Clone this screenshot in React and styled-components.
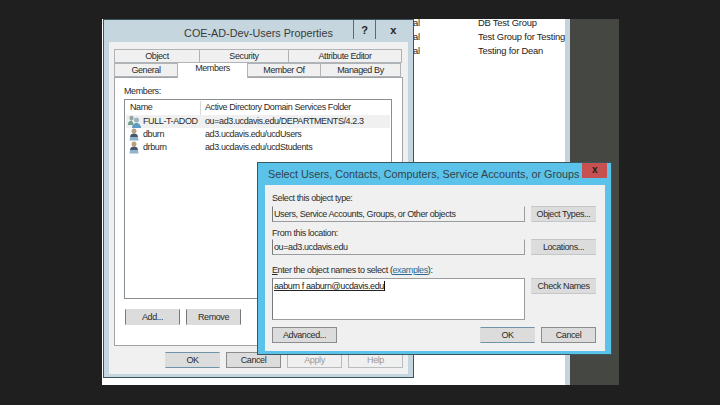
import React from 'react';
import styled, { createGlobalStyle } from 'styled-components';

const GlobalStyle = createGlobalStyle`
  html, body { margin: 0; height: 100%; background: #1f1f1f; overflow: hidden; }
  #root { height: 100%; }
`;

const Page = styled.div`
  width: 720px;
  height: 405px;
  padding: 19px 101px 20px 102px;
  box-sizing: border-box;
  font-family: "Liberation Sans", Arial, sans-serif;
  font-size: 9px;
  letter-spacing: -0.4px;
  color: #2b2b2b;
`;
const Screen = styled.div`
  height: 100%;
  display: flex;
`;
const Desktop = styled.div`
  position: relative;
  flex: 1;
  background: #fff;
`;
const SideStrip = styled.div`
  width: 51px;
  background: #454743;
`;

// window behind the dialogs, only its right part shows
const BackWindow = styled.div`
  height: 100%;
  box-sizing: border-box;
  padding-left: 311px;
  border-right: 5px solid #c5d4dc;
  overflow: hidden;
`;
const BackRow = styled.div`
  display: grid;
  grid-template-columns: 65px 1fr;
  height: 14px;
  line-height: 7px;
  font-size: 9.4px;
  letter-spacing: -0.2px;
  white-space: nowrap;
  color: #222;
`;

const Win = styled.div`
  position: absolute;
  left: ${p => p.$left}px;
  top: ${p => p.$top}px;
  width: ${p => p.$w}px;
  height: ${p => p.$h}px;
  box-sizing: border-box;
  display: flex;
  flex-direction: column;
  background: ${p => p.$frame};
  border: 1px solid #3c5660;
`;
const TitleBar = styled.div`
  position: relative;
  display: flex;
  align-items: center;
  flex: none;
  height: ${p => p.$h}px;
  box-sizing: border-box;
  padding-top: ${p => p.$pt || 0}px;
`;
const PropsTitle = styled.div`
  flex: 1;
  text-align: center;
  font-size: 10.8px;
  letter-spacing: 0;
  color: #3a3a3a;
`;
const Captions = styled.div`
  position: absolute;
  top: 0;
  right: 3px;
  height: 19px;
  display: flex;
`;
const Caption = styled.div`
  width: ${p => p.$w}px;
  height: 100%;
  display: flex;
  align-items: center;
  justify-content: center;
  font-size: 11px;
  font-weight: bold;
  color: #222;
  border-left: ${p => (p.$line ? '1px solid #5b6a70' : 'none')};
  border-right: ${p => (p.$line ? '1px solid #5b6a70' : 'none')};
  box-sizing: border-box;
`;
const PropsBody = styled.div`
  flex: 1;
  margin: 0 5px 5px 5px;
  background: #f0f0f0;
  padding: 7px 5px 6px 6px;
  display: flex;
  flex-direction: column;
`;

const TabRow = styled.div`
  display: flex;
  height: 14px;
  flex: none;
`;
const Tab = styled.div`
  width: ${p => p.$w}px;
  box-sizing: border-box;
  position: relative;
  z-index: ${p => (p.$active ? 2 : 0)};
  height: ${p => (p.$active ? 16 : 14)}px;
  margin-top: ${p => (p.$active ? -1 : 0)}px;
  background: ${p => (p.$active ? '#fff' : '#f0f0f0')};
  border: 1px solid #b0b4b6;
  border-bottom: ${p => (p.$active ? 'none' : '1px solid #b0b4b6')};
  margin-left: -1px;
  text-align: center;
  line-height: ${p => (p.$active ? 11 : 13)}px;
`;
const Panel = styled.div`
  height: 269px;
  box-sizing: border-box;
  background: #fff;
  border: 1px solid #a0a4a6;
  padding: 7px 10px 0 9px;
  margin-left: -1px;
  display: flex;
  flex-direction: column;
`;
const Label = styled.div`
  line-height: 13px;
  color: #2b2b2b;
`;
const ListBox = styled.div`
  margin-top: 1px;
  width: 268px;
  height: 200px;
  box-sizing: border-box;
  border: 1px solid #8a8e90;
  padding: 1px;
  flex: none;
`;
const ListRow = styled.div`
  display: grid;
  grid-template-columns: 74px 1fr;
  height: ${p => (p.$head ? 14 : 13)}px;
  line-height: 13px;
  white-space: nowrap;
  background: ${p => (p.$selected ? '#f0f0f0' : 'transparent')};
`;
const HeadCell = styled.div`
  padding-left: 4px;
  border-left: ${p => (p.$sep ? '1px solid #d8d8d8' : 'none')};
`;
const NameCell = styled.div`
  display: flex;
  align-items: center;
  gap: 2px;
  padding-left: 2px;
`;
const Cell = styled.div`
  padding-left: 5px;
`;
const BtnRow = styled.div`
  display: flex;
  gap: 6px;
  justify-content: ${p => (p.$end ? 'flex-end' : 'flex-start')};
  flex: none;
`;

const btnBorders = {
  plain: { side: '#8a8c8e', edge: '#8a8c8e' },
  sides: { side: '#77797b', edge: '#dcdcdc' },
  soft: { side: '#dcdcdc', edge: '#c4c6c8' },
  primary: { side: '#dcdcdc', edge: '#6f93a8' },
  disabled: { side: '#b8bcbe', edge: '#b8bcbe' },
};
const Btn = styled.div`
  width: ${p => p.$w || 55}px;
  height: 16px;
  box-sizing: border-box;
  background: ${p => (p.$kind === 'disabled' ? '#f0f0f0' : '#dcdcdc')};
  border-style: solid;
  border-width: 1px;
  border-color: ${p => btnBorders[p.$kind || 'plain'].edge} ${p => btnBorders[p.$kind || 'plain'].side};
  color: ${p => (p.$kind === 'disabled' ? '#9a9a9a' : '#2b2b2b')};
  line-height: 14px;
  text-align: center;
  white-space: nowrap;
`;
const PanelButtons = styled(BtnRow)`
  margin-top: 10px;
  padding-left: 1px;
`;
const DialogButtons = styled(BtnRow)`
  margin-top: 6px;
`;

// select users dialog
const SelectTitle = styled.div`
  flex: 1;
  padding-left: 10px;
  font-size: 10.8px;
  letter-spacing: 0;
  color: #33424a;
  white-space: nowrap;
`;
const CloseBtn = styled.div`
  position: absolute;
  right: 4px;
  top: 0;
  width: 25px;
  height: 15px;
  background: #c75050;
  color: #222;
  font-size: 10px;
  font-weight: bold;
  line-height: 14px;
  text-align: center;
`;
const SelectBody = styled.div`
  flex: 1;
  margin: 0 6px 3px 7px;
  background: #f0f0f0;
  padding: 7px 9px 0 7px;
  display: flex;
  flex-direction: column;
`;
const FieldRow = styled.div`
  display: flex;
  gap: 6px;
  align-items: flex-start;
  margin-top: ${p => p.$mt || 0}px;
`;
const Field = styled.div`
  width: 253px;
  height: ${p => p.$h || 16}px;
  box-sizing: border-box;
  background: ${p => (p.$input ? '#fff' : '#f0f0f0')};
  border: 1px solid #9a9c9e;
  border-top-color: ${p => (p.$input ? '#9a9c9e' : '#f0f0f0')};
  border-left-color: #77797b;
  line-height: 14px;
  padding-left: 1px;
  white-space: nowrap;
  overflow: hidden;
`;
const FieldLabel = styled(Label)`
  margin-top: ${p => p.$mt || 0}px;
  height: 12px;
  line-height: 12px;
`;
const Typed = styled.span`
  border-right: 1px solid #111;
  text-decoration: underline;
  color: #222;
`;
const Example = styled.span`
  color: #2a6a96;
  text-decoration: underline;
`;
const Accel = styled.span`
  text-decoration: underline;
`;
const Spacer = styled.div`
  flex: 1;
`;

const UserIcon = () => (
  <svg width="13" height="13" viewBox="0 0 13 13">
    <circle cx="6" cy="3" r="2.5" fill="#b9a184" />
    <path d="M2 9 C2 6.5 4 5.5 6 5.5 C8 5.5 10 6.5 10 9Z" fill="#46586a" />
    <path d="M2 9 H10 L10.5 12.5 H1.5Z" fill="#8fb4cc" />
  </svg>
);

const GroupIcon = () => (
  <svg width="13" height="13" viewBox="0 0 13 13">
    <circle cx="3.5" cy="3" r="2.2" fill="#8fa8a0" />
    <path d="M0 10 C0 6.5 2 5.5 4 5.5 L6 10Z" fill="#6f9f8c" />
    <circle cx="8.5" cy="5" r="2.5" fill="#9fb2bc" />
    <path d="M4 13 C4 9.5 6.5 8 8.5 8 C10.5 8 13 9.5 13 13Z" fill="#5f9cc4" />
  </svg>
);

const backRows = [
  ['al', 'DB Test Group'],
  ['al', 'Test Group for Testing'],
  ['al', 'Testing for Dean'],
];

const members = [
  { name: 'FULL-T-ADOD', folder: 'ou=ad3.ucdavis.edu/DEPARTMENTS/4.2.3', group: true, selected: true },
  { name: 'dburn', folder: 'ad3.ucdavis.edu/ucdUsers' },
  { name: 'drburn', folder: 'ad3.ucdavis.edu/ucdStudents' },
];

const App = () => (
  <Page>
    <GlobalStyle />
    <Screen>
      <Desktop>
        <BackWindow>
          {backRows.map(([type, desc]) => (
            <BackRow key={desc}>
              <span>{type}</span>
              <span>{desc}</span>
            </BackRow>
          ))}
        </BackWindow>

        <Win $left={1} $top={0} $w={311} $h={359} $frame="#c5d6de">
          <TitleBar $h={22} $pt={3}>
            <PropsTitle>COE-AD-Dev-Users Properties</PropsTitle>
            <Captions>
              <Caption $w={23} $line>?</Caption>
              <Caption $w={34}>x</Caption>
            </Captions>
          </TitleBar>
          <PropsBody>
            <TabRow>
              <Tab $w={86}>Object</Tab>
              <Tab $w={90}>Security</Tab>
              <Tab $w={114}>Attribute Editor</Tab>
            </TabRow>
            <TabRow>
              <Tab $w={64}>General</Tab>
              <Tab $w={71} $active>Members</Tab>
              <Tab $w={74}>Member Of</Tab>
              <Tab $w={81}>Managed By</Tab>
            </TabRow>
            <Panel>
              <Label>Members:</Label>
              <ListBox>
                <ListRow $head>
                  <HeadCell>Name</HeadCell>
                  <HeadCell $sep>Active Directory Domain Services Folder</HeadCell>
                </ListRow>
                {members.map(m => (
                  <ListRow key={m.name} $selected={m.selected}>
                    <NameCell>
                      {m.group ? <GroupIcon /> : <UserIcon />}
                      {m.name}
                    </NameCell>
                    <Cell>{m.folder}</Cell>
                  </ListRow>
                ))}
              </ListBox>
              <PanelButtons>
                <Btn $kind="sides">Add...</Btn>
                <Btn $kind="sides">Remove</Btn>
              </PanelButtons>
            </Panel>
            <DialogButtons $end>
              <Btn $kind="primary">OK</Btn>
              <Btn>Cancel</Btn>
              <Btn $kind="disabled">Apply</Btn>
              <Btn $kind="disabled">Help</Btn>
            </DialogButtons>
          </PropsBody>
        </Win>

        <Win $left={155} $top={143} $w={355} $h={193} $frame="#5bc2ea">
          <TitleBar $h={22}>
            <SelectTitle>Select Users, Contacts, Computers, Service Accounts, or Groups</SelectTitle>
            <CloseBtn>x</CloseBtn>
          </TitleBar>
          <SelectBody>
            <FieldLabel>Select this object type:</FieldLabel>
            <FieldRow $mt={2}>
              <Field>Users, Service Accounts, Groups, or Other objects</Field>
              <Btn $w={65} $kind="soft">Object Types...</Btn>
            </FieldRow>
            <FieldLabel $mt={5}>From this location:</FieldLabel>
            <FieldRow>
              <Field>ou=ad3.ucdavis.edu</Field>
              <Btn $w={65} $kind="soft">Locations...</Btn>
            </FieldRow>
            <FieldLabel $mt={9}>
              <Accel>E</Accel>nter the object names to select (<Example>examples</Example>):
            </FieldLabel>
            <FieldRow $mt={2}>
              <Field $h={42} $input><Typed>aaburn f aaburn@ucdavis.edu</Typed></Field>
              <Btn $w={65} $kind="soft">Check Names</Btn>
            </FieldRow>
            <FieldRow $mt={7}>
              <Btn $w={65}>Advanced...</Btn>
              <Spacer />
              <Btn $kind="primary">OK</Btn>
              <Btn>Cancel</Btn>
            </FieldRow>
          </SelectBody>
        </Win>
      </Desktop>
      <SideStrip />
    </Screen>
  </Page>
);

export default App;
